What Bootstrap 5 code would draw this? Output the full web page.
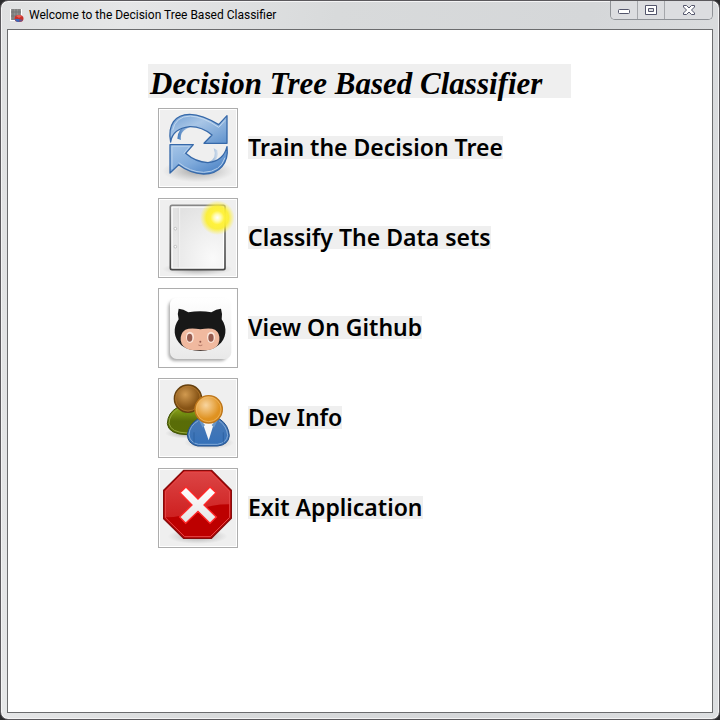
<!DOCTYPE html>
<html lang="en">
<head>
<meta charset="utf-8">
<meta name="viewport" content="width=device-width, initial-scale=1">
<title>Welcome to the Decision Tree Based Classifier</title>
<link href="https://cdn.jsdelivr.net/npm/bootstrap@5.3.0/dist/css/bootstrap.min.css" rel="stylesheet">
<style>
body { background: #2b2b2d; color: #000; font-family: "Noto Sans", sans-serif; }
.app-window { background: linear-gradient(100deg, #dfe0e1, #e5e6e7 15%, #d8dadb 40%, #d5d7d9 70%, #dddfe1); border: 1px solid #5b595d; border-radius: 8px; box-shadow: inset 0 0 0 1px #f4f4f5; padding: 0 6px 6px; }
.title-bar { height: 28px; padding-left: 2px; }
.title-text { font-family: Roboto, sans-serif; font-size: 12px; line-height: 28px; }
.win-buttons { height: 19px; border: 1px solid #8f9297; border-top: 0; border-radius: 0 0 5px 5px; }
.win-buttons button { width: 27px; padding: 0; border: 0; border-right: 1px solid #a5a7ab; background: #dcdde0; }
.win-buttons button:first-child { border-bottom-left-radius: 4px; }
.win-buttons button:last-child { width: 47px; border-right: 0; border-bottom-right-radius: 4px; }
.win-buttons svg { display: block; margin: auto; }
.client-area { border: 1px solid #6b6c6e; padding: 34px 8px 8px 140px; }
.heading-box { width: 423px; max-width: 100%; height: 34px; padding-left: 2px; background: #efefef; font-family: "Liberation Serif", serif; font-size: 31px; line-height: 40px; font-weight: 700; font-style: italic; white-space: nowrap; }
.menu-list { gap: 10px; padding: 10px 0 0 10px; }
.menu-row { gap: 10px; }
.tile { width: 80px; height: 80px; padding: 0; border: 1px solid #adadad; background: #efefef; box-shadow: inset 0 0 0 1px #fff; }
.tile svg { display: block; width: 78px; height: 78px; }
.menu-label { margin-bottom: 1px; background: #efefef; font-family: "Noto Sans", sans-serif; font-weight: 600; font-size: 23px; line-height: 23px; }
</style>
<script src="https://cdn.jsdelivr.net/npm/bootstrap@5.3.0/dist/js/bootstrap.bundle.min.js"></script>
</head>
<body>
<div class="app-window d-flex flex-column min-vh-100">
  <header class="title-bar d-flex justify-content-between align-items-start">
    <div class="d-flex align-items-center gap-1">
      <svg width="16" height="28" viewBox="0 0 16 28" aria-hidden="true">
        <path d="M1 8h12v12H1z" fill="#fff"/><path d="M2 8h10v11H2z" fill="#919191"/>
        <path d="M4 8v11M7 8v11M10 8v11M2 11h10M2 15h10" stroke="#686868" stroke-width="1" opacity=".7"/>
        <ellipse cx="10" cy="17.500" rx="4.500" ry="3.500" fill="#c9312b"/><path d="M10 18V21Q6 21 6 18Z" fill="#3a68bb"/><path d="M10 18l4 1q-1 2-4 2z" fill="#69558c"/><path d="M7 15q3-2 6 0l-3 2z" fill="#ef5f55"/>
      </svg>
      <span class="title-text">Welcome to the Decision Tree Based Classifier</span>
    </div>
    <div class="win-buttons d-flex">
      <button type="button" aria-label="Minimize"><svg width="14" height="12"><rect x="1.500" y="5.500" width="11" height="4" rx="1" fill="#fff" stroke="#53556b"/></svg></button>
      <button type="button" aria-label="Maximize"><svg width="14" height="12"><path d="M1.500 1.500h11v9h-11z" fill="#fff" stroke="#53556b"/><path d="M4.500 4.500h5v3h-5z" fill="#dcdde0" stroke="#53556b"/></svg></button>
      <button type="button" aria-label="Close"><svg width="14" height="12"><path d="M1.500 1.500h3L7 4l2.500-2.500h3V3L9.500 6l3 3v1.500h-3L7 8l-2.500 2.500h-3V9l3-3-3-3z" fill="#fff" stroke="#53556b"/></svg></button>
    </div>
  </header>
  <main class="client-area bg-white flex-grow-1">
    <h1 class="heading-box m-0">Decision Tree Based Classifier</h1>
    <div class="menu-list d-flex flex-column">
      <div class="menu-row d-flex align-items-center">
        <button class="tile" id="train" type="button">
          <svg viewBox="27 27 234 234" aria-hidden="true">
            <defs>
              <linearGradient id="arrowTop" x1="0" y1="0" x2="1" y2="1"><stop stop-color="#6e9dd3"/><stop offset=".4" stop-color="#a9c6e6"/><stop offset="1" stop-color="#5f92cd"/></linearGradient>
              <linearGradient id="arrowLow" x1="0" y1="0" x2="1" y2="1"><stop stop-color="#a6c6e8"/><stop offset=".5" stop-color="#7faadb"/><stop offset="1" stop-color="#3f79c0"/></linearGradient>
              <linearGradient id="tail" x1="0" y1="0" x2="1" y2="0"><stop stop-color="#3f78bb"/><stop offset="1" stop-color="#c6d8ec"/></linearGradient>
              <radialGradient id="shade"><stop stop-color="#777" stop-opacity=".65"/><stop offset="1" stop-color="#999" stop-opacity="0"/></radialGradient>
            </defs>
            <ellipse cx="144" cy="213" rx="108" ry="34" fill="url(#shade)"/>
            <path d="M93 120Q88 91 122 82L108 78Q84 84 82 116Z" fill="url(#tail)"/>
            <path d="M62 126C52 74 76 43 119 43Q158 44 206 74L231 47V130H162L186 105Q155 79 119 80C83 84 66 98 62 126Z" fill="url(#arrowTop)" stroke="#3769a9" stroke-width="4" stroke-linejoin="round"/>
            <path d="M68 91Q76 49 121 48Q160 50 206 82L225 61" fill="none" stroke="#c4d9ef" stroke-width="3"/>
            <path d="M191 145Q202 174 177 186L187 189Q209 174 202 151Z" fill="url(#tail)" opacity=".65"/>
            <path d="M231 140C237 190 208 222 161 222Q119 219 86 194L60 219V134H130L107 160Q136 186 173 188C206 185 224 169 231 140Z" fill="url(#arrowLow)" stroke="#3769a9" stroke-width="4" stroke-linejoin="round"/>
            <path d="M66 207V139H119L101 161M86 188Q120 216 161 217Q212 215 225 173" fill="none" stroke="#b7d0eb" stroke-width="3"/>
          </svg>
        </button>
        <label class="menu-label" for="train">Train the Decision Tree</label>
      </div>
      <div class="menu-row d-flex align-items-center">
        <button class="tile" id="classify" type="button">
          <svg viewBox="27 27 234 234" aria-hidden="true">
            <defs>
              <radialGradient id="paper" cx=".8" cy=".85" r="1"><stop stop-color="#fafafa"/><stop offset="1" stop-color="#e2e2e2"/></radialGradient>
              <linearGradient id="edge" x1="0" y1="0" x2="0" y2="1"><stop stop-color="#868686"/><stop offset="1" stop-color="#484848"/></linearGradient>
              <radialGradient id="glow"><stop stop-color="#fff"/><stop offset=".2" stop-color="#fffbb0"/><stop offset=".4" stop-color="#fff23d"/><stop offset=".65" stop-color="#fcef2d" stop-opacity=".9"/><stop offset="1" stop-color="#fff04a" stop-opacity="0"/></radialGradient>
            </defs>
            <ellipse cx="142" cy="237" rx="106" ry="20" fill="url(#shade)"/>
            <rect x="61" y="46" width="164" height="193" rx="5" fill="#fff" stroke="url(#edge)" stroke-width="5"/>
            <rect x="68" y="53" width="151" height="180" fill="url(#paper)"/>
            <path d="M85 53V232" stroke="#dadada" stroke-width="2"/><path d="M89 53V232" stroke="#f2f2f2" stroke-width="3"/>
            <g fill="#fff" stroke="#aaa" stroke-width="2"><circle cx="76" cy="116" r="4"/><circle cx="76" cy="170" r="4"/></g>
            <circle cx="202" cy="83" r="52" fill="url(#glow)"/>
          </svg>
        </button>
        <label class="menu-label" for="classify">Classify The Data sets</label>
      </div>
      <div class="menu-row d-flex align-items-center">
        <button class="tile bg-white" id="github" type="button">
          <svg viewBox="27 27 234 234" aria-hidden="true">
            <defs>
              <linearGradient id="plate" x1="0" y1="0" x2="0" y2="1"><stop stop-color="#fff"/><stop offset="1" stop-color="#e9e9e9"/></linearGradient>
              <filter id="soft" x="-20%" y="-20%" width="140%" height="140%"><feGaussianBlur stdDeviation="4"/></filter>
            </defs>
            <rect x="55" y="61" width="177" height="182" rx="20" fill="#aaa" filter="url(#soft)"/>
            <rect x="60" y="53" width="184" height="184" rx="20" fill="url(#plate)"/>
            <path d="M86 86Q100 87 115 97Q151 91 184 97Q199 87 213 86Q218 101 215 118C233 143 230 177 205 196Q184 213 151 213Q116 213 94 196C70 174 68 143 86 118Q81 101 86 86Z" fill="#181818"/>
            <path d="M106 149Q122 143 151 148Q181 143 195 149Q211 160 208 181Q205 204 182 209Q151 213 119 209Q95 203 92 181Q90 160 106 149Z" fill="#f0b99f"/>
            <g fill="#fbe6dc"><ellipse cx="120" cy="172" rx="12" ry="17"/><ellipse cx="183" cy="172" rx="12" ry="17"/></g>
            <g fill="#965b4e"><ellipse cx="119" cy="173" rx="8" ry="12"/><ellipse cx="183" cy="173" rx="8" ry="12"/><circle cx="151" cy="185" r="3"/></g>
            <path d="M145 195Q151 199 157 195" fill="none" stroke="#965b4e" stroke-width="2"/>
          </svg>
        </button>
        <label class="menu-label" for="github">View On Github</label>
      </div>
      <div class="menu-row d-flex align-items-center">
        <button class="tile" id="dev" type="button">
          <svg viewBox="27 27 234 234" aria-hidden="true">
            <defs>
              <radialGradient id="brown" cx=".4" cy=".35"><stop stop-color="#d19a50"/><stop offset="1" stop-color="#865315"/></radialGradient>
              <radialGradient id="gold" cx=".4" cy=".35"><stop stop-color="#f8d5a0"/><stop offset="1" stop-color="#df9221"/></radialGradient>
              <linearGradient id="green" x1="0" y1="0" x2="0" y2="1"><stop stop-color="#8da81b"/><stop offset=".5" stop-color="#596c08"/><stop offset="1" stop-color="#596d05"/></linearGradient>
              <linearGradient id="blue" x1="0" y1="0" x2="0" y2="1"><stop stop-color="#4979b5"/><stop offset="1" stop-color="#3571b9"/></linearGradient>
            </defs>
            <ellipse cx="110" cy="190" rx="65" ry="16" fill="url(#shade)"/><ellipse cx="177" cy="218" rx="75" ry="20" fill="url(#shade)"/>
            <path d="M83 112H141Q170 130 175 165Q170 194 112 194Q55 193 52 161Q53 128 83 112Z" fill="url(#green)" stroke="#3f5204" stroke-width="3"/>
            <path d="M84 117Q58 133 57 160Q62 188 112 189" fill="none" stroke="#94a63f" stroke-width="3"/>
            <path d="M91 119L103 139L112 127L124 139L132 121" fill="#6d8d10"/>
            <circle cx="114" cy="86" r="41" fill="url(#brown)" stroke="#66400e" stroke-width="4"/><circle cx="114" cy="86" r="37" fill="none" stroke="#b57b31" stroke-width="2"/>
            <path d="M143 147H209Q236 165 238 197Q236 224 203 228H143Q113 222 112 194Q117 163 143 147Z" fill="url(#blue)" stroke="#234f88" stroke-width="3"/>
            <path d="M145 152Q119 167 117 193Q119 218 145 223H202Q230 219 233 196Q230 168 207 152" fill="none" stroke="#83a9d6" stroke-width="3"/>
            <path d="M157 157L176 211L193 157Z" fill="#f7f7f7"/><path d="M147 151L158 173L165 165L153 152M203 151L192 173L185 165L197 152" fill="#6996c7"/>
            <path d="M132 187V220M220 187V220" stroke="#285a98" stroke-width="2"/>
            <circle cx="176" cy="118" r="41" fill="url(#gold)" stroke="#bd761b" stroke-width="4"/><circle cx="176" cy="118" r="37" fill="none" stroke="#f2bd6c" stroke-width="2"/>
          </svg>
        </button>
        <label class="menu-label" for="dev">Dev Info</label>
      </div>
      <div class="menu-row d-flex align-items-center">
        <button class="tile" id="exit" type="button">
          <svg viewBox="27 27 234 234" aria-hidden="true">
            <defs>
              <linearGradient id="sheen" x1="0" y1="0" x2="0" y2="1"><stop stop-color="#dc4545"/><stop offset="1" stop-color="#ce2020"/></linearGradient>
              <linearGradient id="cross" x1="0" y1="0" x2="0" y2="1"><stop stop-color="#fff"/><stop offset="1" stop-color="#e4e4e4"/></linearGradient>
            </defs>
            <ellipse cx="143" cy="229" rx="90" ry="23" fill="url(#shade)"/>
            <path d="M101 31H185L244 91V175L184 235H101L41 176V91Z" fill="#bd0000" stroke="#850d0d" stroke-width="4"/>
            <path d="M102 35H183L240 93V133Q184 132 133 153Q91 173 45 172V93Z" fill="url(#sheen)"/>
            <path d="M103 36H182L239 94V172L181 230H104L46 173V94Z" fill="none" stroke="#e54a4a" stroke-width="3"/>
            <path d="M108 81L144 117L180 81L198 98L162 135L199 171L180 190L144 154L107 190L89 171L126 135L90 98Z" fill="url(#cross)" stroke="#ff2929" stroke-width="4"/>
          </svg>
        </button>
        <label class="menu-label" for="exit">Exit Application</label>
      </div>
    </div>
  </main>
</div>
</body>
</html>
